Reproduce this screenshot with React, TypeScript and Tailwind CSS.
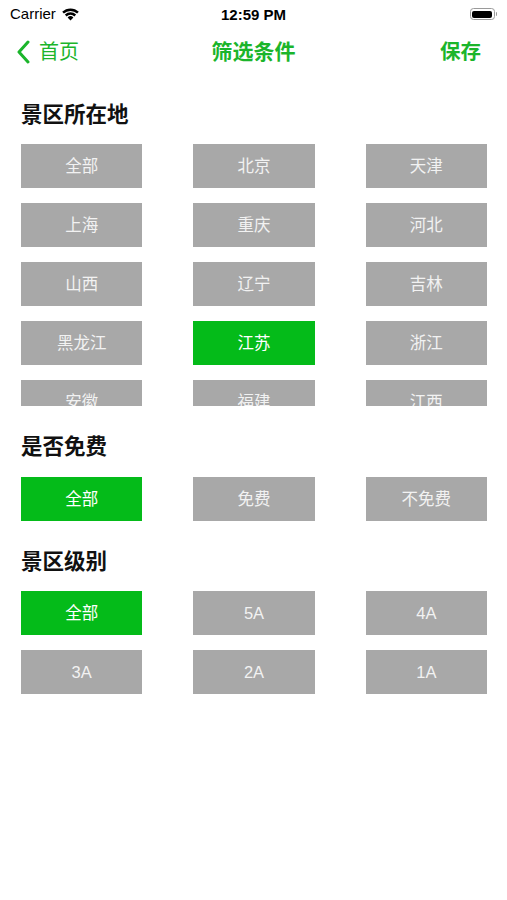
import React from "react";

const font = { fontFamily: '"Liberation Sans", "Noto Sans CJK SC", sans-serif' };

function Btn({ label, active }: { label: string; active?: boolean }) {
  return (
    <div
      className={
        "h-[44px] flex items-center justify-center text-[16.5px] " +
        (active ? "bg-[#04bb19] text-white" : "bg-[#a8a8a8] text-[#f2f2f2]")
      }
    >
      {label}
    </div>
  );
}

function Grid({ items, active }: { items: string[]; active: string }) {
  return (
    <div className="grid grid-cols-3 gap-x-[51px] gap-y-[15px]">
      {items.map((it) => (
        <Btn key={it} label={it} active={it === active} />
      ))}
    </div>
  );
}

function Title({ children }: { children: React.ReactNode }) {
  return <div className="h-[24px] leading-[24px] text-[21.5px] font-bold text-[#111]">{children}</div>;
}

export default function App() {
  const provinces = ["全部", "北京", "天津", "上海", "重庆", "河北", "山西", "辽宁", "吉林", "黑龙江", "江苏", "浙江", "安徽", "福建", "江西"];
  return (
    <div className="w-[507px] h-[900px] bg-white relative overflow-hidden" style={font}>
      {/* status bar */}
      <div className="h-[28px] flex items-center px-[10px] relative">
        <div className="flex items-center gap-[5px] text-[15px] text-black">
          <span>Carrier</span>
          <svg width="19" height="14" viewBox="0 0 19 14">
            <path d="M9.5 13.5 L6.6 10.4 A4.2 4.2 0 0 1 12.4 10.4 Z" fill="#000" />
            <path d="M3.9 7.6 A8 8 0 0 1 15.1 7.6 L13.4 9.4 A5.6 5.6 0 0 0 5.6 9.4 Z" fill="#000" />
            <path d="M1.2 4.8 A11.8 11.8 0 0 1 17.8 4.8 L16.1 6.6 A9.4 9.4 0 0 0 2.9 6.6 Z" fill="#000" />
          </svg>
        </div>
        <div className="absolute left-0 right-0 top-[4px] text-center text-[15px] font-bold text-black">12:59 PM</div>
        <div className="ml-auto flex items-center mr-[0px]">
          <div className="w-[25px] h-[12px] rounded-[3.5px] border border-[#9a9a9a] p-[1.5px]">
            <div className="w-full h-full rounded-[2px] bg-black" />
          </div>
          <div className="w-[1.5px] h-[4px] bg-[#9a9a9a] ml-[1px] rounded-r" />
        </div>
      </div>
      {/* nav bar */}
      <div className="h-[48px] flex items-center relative px-[16px] text-[#1bb52b]">
        <div className="flex items-center gap-[9px]">
          <svg width="14" height="24" viewBox="0 0 14 24">
            <path d="M12 2 L3 12 L12 22" fill="none" stroke="#1bb52b" strokeWidth="3" strokeLinecap="round" strokeLinejoin="round" />
          </svg>
          <span className="text-[20px]">首页</span>
        </div>
        <div className="absolute left-0 right-0 text-center text-[21px] font-bold">筛选条件</div>
        <div className="ml-auto mr-[10px] text-[20.5px] font-bold">保存</div>
      </div>
      {/* content */}
      <div className="px-[21px] pt-[27px] pr-[20px]">
        <Title>景区所在地</Title>
        <div className="mt-[17px] h-[262px] overflow-hidden">
          <Grid items={provinces} active="江苏" />
        </div>
        <div className="mt-[29px]">
          <Title>是否免费</Title>
        </div>
        <div className="mt-[18px]">
          <Grid items={["全部", "免费", "不免费"]} active="全部" />
        </div>
        <div className="mt-[29px]">
          <Title>景区级别</Title>
        </div>
        <div className="mt-[17px]">
          <Grid items={["全部", "5A", "4A", "3A", "2A", "1A"]} active="全部" />
        </div>
      </div>
    </div>
  );
}
